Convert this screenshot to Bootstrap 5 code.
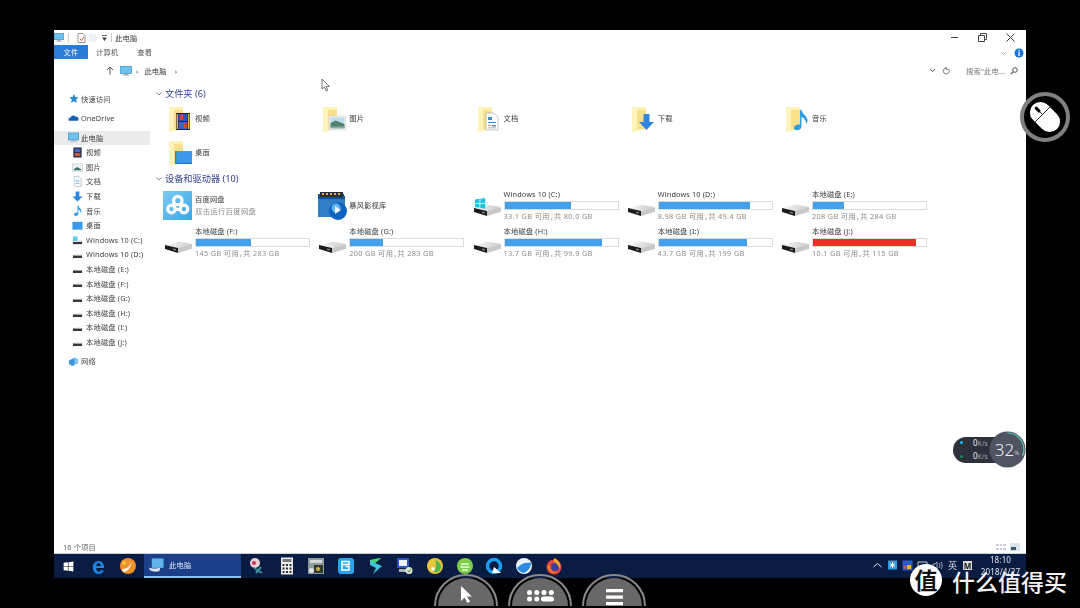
<!DOCTYPE html>
<html lang="zh-CN">
<head>
    <meta charset="UTF-8">
    <title>此电脑</title>
    <link href="https://cdn.jsdelivr.net/npm/bootstrap@5.3.2/dist/css/bootstrap.min.css" rel="stylesheet">
    <style>
        html, body { height: 100%; }
        body { background: #000; overflow: hidden; font-family: "Noto Sans", "Noto Sans CJK SC", sans-serif; font-size: 7.3px; letter-spacing: .15px; color: #3a3a3a; line-height: 12px; }
        .desk { position: relative; width: 1080px; height: 608px; padding: 30px 54px 0; }
        .explorer { height: 524px; background: #fff; filter: blur(.35px); }
        .title-row { height: 15px; }
        .title-row .sep { width: 1px; height: 9px; background: #ccc; }
        .tight { margin-left: 2px; }
        .tight3 { margin-left: 3px; }
        .win-btn { width: 28px; display: flex; justify-content: center; }
        .ribbon-row { height: 15px; }
        .rib-tab { padding: 0 8px; line-height: 14px; color: #555; }
        .rib-tab.active { background: #2b7cd8; color: #fff; width: 34px; text-align: center; padding: 0; }
        .rib-tab.view-tab { margin-left: 3px; }
        .help-wrap { margin-right: 2px; margin-top: 3px; gap: 7px; }
        .addr-row { height: 25px; padding-bottom: 4px; }
        .crumb { margin-left: 6px; }
        .search-hint { color: #777; width: 44px; margin-left: 16px; }
        .side-col { width: 96px; padding-top: 6.7px; flex: none; }
        .side-row { height: 14.6px; line-height: 14.6px; padding: 0 0 0 14px; border: 0; background: transparent; color: #404040; display: flex; align-items: center; border-radius: 0 !important; white-space: nowrap; }
        .side-row svg { width: 11px; height: 11px; margin-right: 2px; flex: none; }
        .side-row.kid { padding-left: 18px; }
        .side-row.kid svg { margin-right: 3px; }
        .side-row.on { background: #ebebeb; }
        .side-gap { margin-top: 4.4px; }
        .side-gap2 { margin-top: 5.4px; }
        .pane { padding: 2px 0 0 0; }
        .group-head { height: 14px; line-height: 14px; padding-left: 6px; color: #2f3f8c; font-size: 9.2px; letter-spacing: 0; display: flex; align-items: center; gap: 3px; }
        .group-next { margin-top: 3px; }
        .tile-grid { display: grid; grid-template-columns: repeat(5, 154.25px); padding-left: 13px; }
        .folders { grid-auto-rows: 34px; }
        .drives { grid-auto-rows: 37px; margin-top: 2px; }
        .tile { display: flex; align-items: flex-start; }
        .tile svg { width: 32px; height: 32px; flex: none; }
        .folders .tile { align-items: center; }
        .single { height: 33px; align-items: center; }
        .drive-name { height: 12px; line-height: 12px; }
        .drive-bar { width: 115px; height: 9px; margin-top: 1px; background: #fff; border: 1px solid #dcdcdc; border-radius: 0; }
        .drive-bar .progress-bar { background: #45a0ea; }
        .drive-bar .progress-bar.full { background: #e53226; }
        .drive-sub { color: #8c8c8c; line-height: 12px; letter-spacing: .35px; font-feature-settings: "halt"; }
        .status-row { height: 14px; padding: 0 6px 0 9px; color: #666; border-bottom: 1px solid #c9d0da; }
        .taskbar { height: 24px; background: #0a1c42; filter: blur(.3px); color: #fff; }
        .task-slot { width: 29.7px; flex: none; display: flex; justify-content: center; align-items: center; }
        .task-slot svg { width: 18px; height: 18px; }
        .edge-e { font-family: "Liberation Sans", sans-serif; font-weight: 700; font-size: 23px; line-height: 20px; color: #1c86e8; }
        .task-on { width: 97px; flex: none; align-self: stretch; background: #1a3f88; border-bottom: 2px solid #8fc3f0; padding-left: 4px; gap: 4px; color: #dfe8f5; margin: 0 1px; }
        .task-on svg { width: 17px; height: 17px; }
        .tray-slot { width: 15px; flex: none; display: flex; justify-content: center; align-items: center; color: #d5dbe6; font-size: 9px; line-height: 9px; margin-top: -2px; }
        .tray-slot svg { width: 11px; height: 11px; }
        .tray-m { background: #d8d8d8; color: #111; width: 9px; height: 9px; font-size: 8px; line-height: 9px; text-align: center; font-weight: 700; }
        .clock { width: 51px; text-align: center; color: #dfe5ee; line-height: 12px; font-size: 8px; }
        .over { position: absolute; }
        .cursor-arrow { left: 321px; top: 78px; width: 10px; height: 14px; }
        .mouse-ring { left: 1020px; top: 92px; width: 50px; height: 50px; }
        .net-pill { left: 953px; top: 437px; width: 56px; height: 26px; border-radius: 13px; background: #2d313c; color: #aab; font-size: 6.5px; }
        .net-line { position: absolute; left: 20px; white-space: nowrap; line-height: 10px; }
        .net-line b { font-weight: 400; color: #eee; font-size: 8px; }
        .net-dot { position: absolute; left: 7px; width: 3px; height: 3px; border-radius: 50%; }
        .net-dial { left: 989px; top: 431px; width: 37px; height: 37px; }
        .net-num { left: 989px; top: 431px; width: 36px; height: 37px; display: flex; align-items: center; justify-content: center; color: #f0f0f0; font-size: 17px; font-weight: 300; letter-spacing: 0; }
        .net-num small { font-size: 6px; margin-top: 6px; }
        .round-btn { top: 574px; width: 64px; height: 32px; }
        .stamp { left: 910px; top: 564px; width: 32px; height: 32px; border-radius: 50%; background: #fff; color: #111; font-family: "Noto Sans CJK SC", sans-serif; font-size: 23px; font-weight: 700; line-height: 31px; text-align: center; }
        .stamp-text { left: 952px; top: 570px; color: #f2f2f2; font-family: "Noto Sans CJK SC", sans-serif; font-size: 23px; font-weight: 500; line-height: 22px; letter-spacing: 0; white-space: nowrap; }
    </style>
</head>
<body>

<svg width="0" height="0" class="position-absolute">
    <defs>
        <linearGradient id="cloudBg" x1="0" y1="0" x2="1" y2="1"><stop offset="0" stop-color="#7ccbf4"/><stop offset="1" stop-color="#3ba6e6"/></linearGradient>
        <linearGradient id="hddTop" x1="0" y1="0" x2="1" y2="0"><stop offset="0" stop-color="#fafafa"/><stop offset="1" stop-color="#c9c9c9"/></linearGradient>

        <symbol id="pc" viewBox="0 0 16 14">
            <rect x="0.5" y="0.5" width="15" height="10" fill="#6ec2ee" stroke="#3d8fc4"/>
            <rect x="5" y="11" width="6" height="1.5" fill="#9ab"/><rect x="3" y="12.5" width="10" height="1.5" fill="#c4ccd4"/>
        </symbol>

        <symbol id="fold-base" viewBox="0 0 32 32">
            <path d="M6 5H20V27L6 30Z" fill="#fdf0b0"/>
            <path d="M11 8H20V27H11Z" fill="#f9e08a"/>
            <path d="M6 5H18L11 8V29L6 30Z" fill="#fff3bc"/>
        </symbol>
        <symbol id="fold-video" viewBox="0 0 32 32">
            <use href="#fold-base" width="32" height="32"/>
            <rect x="13" y="11" width="14" height="17" fill="#1d2433"/>
            <rect x="15.5" y="12" width="9" height="7" fill="#2d54c9"/>
            <rect x="15.5" y="20" width="9" height="7" fill="#3a62d5"/>
            <path d="M17 13h3v5h-3zM21 21h3v5h-3z" fill="#d8412e"/>
            <path d="M13.5 12h1.5v15h-1.5zM25 12h1.5v15H25z" fill="#e0b43c"/>
        </symbol>
        <symbol id="fold-pic" viewBox="0 0 32 32">
            <use href="#fold-base" width="32" height="32"/>
            <rect x="12" y="14" width="17" height="14" fill="#f2f2f2" stroke="#cfd4d8" stroke-width=".6"/>
            <rect x="13.5" y="15.5" width="14" height="6" fill="#bcdcf0"/>
            <path d="M13.5 21l5-2.5 9 3.5v4h-14z" fill="#50836f"/>
            <rect x="13.5" y="24.5" width="14" height="2" fill="#8aa"/>
        </symbol>
        <symbol id="fold-doc" viewBox="0 0 32 32">
            <use href="#fold-base" width="32" height="32"/>
            <path d="M14 11h8l4 4v13H14z" fill="#fff" stroke="#a8b0b8" stroke-width=".7"/>
            <path d="M16 15h4v3h-4zM16 20h8v1h-8zM20 23h4v1.6h-4z" fill="#3f8fd0"/>
            <path d="M16 23h3v1h-3zM16 25.4h8v.8h-8z" fill="#8a98a6"/>
        </symbol>
        <symbol id="fold-down" viewBox="0 0 32 32">
            <use href="#fold-base" width="32" height="32"/>
            <path d="M17.5 12h6v8h4.5l-7.5 8-7.5-8h4.500z" fill="#2f86e0"/>
        </symbol>
        <symbol id="fold-music" viewBox="0 0 32 32">
            <use href="#fold-base" width="32" height="32"/>
            <path d="M20 8h1.500c.5 4 5 5 6 10 .2 1.500-.5 3-1.200 4 0-3-2.300-6-4.800-7V24.500c0 2.300-2.200 3.800-4.500 3.800-2 0-3-1-3-2.300 0-2 2.500-3.500 4.500-3.500.6 0 1.200.1 1.500.3z" fill="#2f9fdf"/>
        </symbol>
        <symbol id="fold-desk" viewBox="0 0 32 32">
            <use href="#fold-base" width="32" height="32"/>
            <rect x="12" y="15" width="17" height="13" fill="#3d97ea"/>
            <rect x="12" y="15" width="1.500" height="13" fill="#2f9b57"/>
            <rect x="12" y="26.500" width="17" height="1.500" fill="#2a80cc"/>
        </symbol>

        <symbol id="baidu" viewBox="0 0 32 32">
            <rect x="0" y="2" width="29" height="29" fill="url(#cloudBg)"/>
            <g fill="none" stroke="#fff" stroke-width="3.200">
                <circle cx="8.500" cy="20" r="3.800"/>
                <circle cx="21" cy="20" r="3.800"/>
                <circle cx="14.800" cy="11.500" r="4.200"/>
                <path d="M11 15l-3 2M18.500 15l3 2M12 20.500h5.500"/>
            </g>
        </symbol>
        <symbol id="storm" viewBox="0 0 32 32">
            <path d="M1 5h26v2h1v21H1z" fill="#12508f"/>
            <path d="M3 3h23v5H3z" fill="#2c2f36"/>
            <path d="M5 4h2v2H5zM9 4h2v2H9zM13 4h2v2h-2zM17 4h2v2h-2zM21 4h2v2h-2z" fill="#e8b23a"/>
            <rect x="1" y="10" width="27" height="18" fill="#2e7fc8"/>
            <circle cx="21" cy="22" r="9" fill="#1163c2"/>
            <circle cx="19" cy="19" r="4.500" fill="#5fb6ef"/>
            <path d="M18 17l6 4-6 4z" fill="#e9f5ff"/>
        </symbol>

        <symbol id="hdd" viewBox="0 0 32 32">
            <path d="M2 20l14-3.200 13 2.200-14 4z" fill="url(#hddTop)"/>
            <path d="M2 20l13 3v5L2 24z" fill="#1c1c1c"/>
            <path d="M10 23.500l3 .7v1.400l-3-.7z" fill="#888"/>
            <path d="M15 23l14-4v4.800L15 28z" fill="#c8c8c8"/>
        </symbol>
        <symbol id="hdd-win" viewBox="0 0 32 32">
            <use href="#hdd" width="32" height="32"/>
            <path d="M3 11.500l4.500-.7v4.200H3zM8.300 10.700l5-.8V15h-5zM3 15.700h4.500v4l-4.500-.6zM8.300 15.700h5v5l-5-.7z" fill="#2bbde0"/>
        </symbol>

        <symbol id="s-star" viewBox="0 0 12 12"><path d="M6.500 1l1.500 3.300 3.500.4-2.600 2.400.7 3.500L6.500 9 3.400 10.600l.7-3.500L1.500 4.700 5 4.300z" fill="#2c87d6"/></symbol>
        <symbol id="s-cloud" viewBox="0 0 12 12"><path d="M1 9.500c-1-1.700 0-3.500 1.800-3.500C3.500 3.800 6.500 3 8 5c2-.3 3.600 1.300 3.500 3 0 .8-.2 1.500-.5 1.500z" fill="#1560b0"/></symbol>
        <symbol id="s-video" viewBox="0 0 12 12"><rect x="1.500" y="0.500" width="9" height="11" fill="#28304a"/><rect x="3" y="2" width="6" height="3.500" fill="#3f6ac9"/><rect x="3" y="6.500" width="6" height="3.500" fill="#c85a40"/></symbol>
        <symbol id="s-pic" viewBox="0 0 12 12"><rect x="0.500" y="2" width="11" height="8" fill="#edf1f4" stroke="#b8c0c8" stroke-width=".6"/><path d="M2 8l3.500-2.500L10 8v1H2z" fill="#3d6f74"/></symbol>
        <symbol id="s-doc" viewBox="0 0 12 12"><path d="M2.500.5h5l2.500 2.500v8.500H2.500z" fill="#f7fafc" stroke="#a9b4bd" stroke-width=".7"/><path d="M4 5h4v.9H4zM4 7.500h4v.9H4z" fill="#6fa9d6"/></symbol>
        <symbol id="s-down" viewBox="0 0 12 12"><path d="M4 .5h4v5.500h3.500L6 11.500.5 6H4z" fill="#2f86e0"/></symbol>
        <symbol id="s-music" viewBox="0 0 12 12"><path d="M6 .5h1c.3 2.500 3 3.300 3.300 6 0 .9-.4 1.700-.8 2.300 0-1.800-1.200-3.300-2.500-3.800v4.600C7 11 5.700 12 4.300 12 3 12 2.200 11.300 2.200 10.400 2.200 9 3.800 8.200 5 8.200c.4 0 .8 0 1 .2z" fill="#2f9fdf"/></symbol>
        <symbol id="s-desk" viewBox="0 0 12 12"><rect x="0.500" y="2" width="11" height="8.500" fill="#3a97ea"/></symbol>
        <symbol id="s-cwin" viewBox="0 0 12 12"><rect x="1" y="1.500" width="5" height="5" fill="#5ccdea"/><rect x="1" y="7.500" width="10" height="2.500" fill="#33393f"/><rect x="6" y="6" width="5" height="1.500" fill="#cfd4d8"/></symbol>
        <symbol id="s-disk" viewBox="0 0 12 12"><rect x="1" y="7" width="10" height="2.800" fill="#33383d"/><rect x="3" y="6.200" width="7" height=".8" fill="#c8ccd0"/></symbol>
        <symbol id="s-net" viewBox="0 0 12 12"><path d="M1 5l6-3 4 1.500v4L5 11 1 9z" fill="#3d9ade"/><path d="M7 2l4 1.500v4L7 9.500z" fill="#7fc4ee"/></symbol>

        <symbol id="t-orange" viewBox="0 0 18 18"><circle cx="9" cy="9" r="8" fill="#ef8f2c"/><path d="M3 12c4 0 8-2 10-8-1 6-3 9-7 11-2 0-3-1-3-3z" fill="#fff3dc"/><circle cx="5" cy="6" r="2" fill="#f6c33e"/></symbol>
        <symbol id="t-pc" viewBox="0 0 18 18"><path d="M4 1.500h12.500v10H4z" fill="#5fb4ee"/><path d="M1 11c3 1.500 8 1.500 12 .5l-1 3.500c-4 1-7 .5-10-1z" fill="#d6e6f5"/></symbol>
        <symbol id="t-snip" viewBox="0 0 18 18"><circle cx="7" cy="6" r="5" fill="#e8cfd4"/><circle cx="6" cy="6" r="2" fill="#c23a55"/><path d="M6 11l8 5M13 10l-5 6" stroke="#3a8a9a" stroke-width="2"/></symbol>
        <symbol id="t-calc" viewBox="0 0 18 18"><rect x="3" y="0.500" width="12" height="17" fill="#eee"/><rect x="4.500" y="2" width="9" height="3" fill="#777"/><path d="M4.500 7h2v2h-2zM8 7h2v2H8zM11.500 7h2v2h-2zM4.500 10.500h2v2h-2zM8 10.500h2v2H8zM11.500 10.500h2v2h-2zM4.500 14h2v2h-2zM8 14h2v2H8zM11.500 14h2v2h-2z" fill="#333"/></symbol>
        <symbol id="t-panel" viewBox="0 0 18 18"><rect x="1" y="1" width="16" height="16" fill="#8f9a9c"/><rect x="3" y="3" width="12" height="3" fill="#d2d8d9"/><rect x="7" y="8" width="9" height="8" fill="#2f3a2a"/><circle cx="11" cy="12" r="2" fill="#d2b04c"/><circle cx="4.500" cy="13.500" r="2.500" fill="#e2e2e2"/></symbol>
        <symbol id="t-qq" viewBox="0 0 18 18"><rect x="1" y="1" width="16" height="16" rx="3" fill="#2ba4ee"/><path d="M5 4.500h7v3H5zM5 7.500v5.500h7V9.500H8.500" fill="none" stroke="#fff" stroke-width="1.500"/></symbol>
        <symbol id="t-wing" viewBox="0 0 18 18"><path d="M3 3l11-2-6 5 7 3-9 8 3-6-6-3z" fill="#3fc4d8"/><path d="M3 3l11-2-6 5z" fill="#4bd468"/></symbol>
        <symbol id="t-net" viewBox="0 0 18 18"><rect x="1" y="1" width="12" height="10" fill="#2b53c8"/><rect x="3" y="3" width="8" height="6" fill="#f0f4fa"/><rect x="3" y="12" width="7" height="3" fill="#aeb4bc"/><circle cx="13" cy="13.500" r="3.500" fill="#dfe5d5"/><path d="M11.500 14l1.500 1 2-3" stroke="#3a8c3a" fill="none"/></symbol>
        <symbol id="t-music" viewBox="0 0 18 18"><circle cx="9" cy="9" r="8" fill="#e8c53a"/><path d="M9 3c4 1 6 4 6 8-1 3-4 5-7 4 2-3 3-7 1-12z" fill="#4bb84f"/><circle cx="7" cy="12" r="1.800" fill="#fff"/></symbol>
        <symbol id="t-green" viewBox="0 0 18 18"><circle cx="9" cy="9" r="8" fill="#7fce4b"/><path d="M5 7h8M4.500 10h9M6 13h6" stroke="#eaffd8" stroke-width="1.500"/></symbol>
        <symbol id="t-q" viewBox="0 0 18 18"><circle cx="9" cy="9" r="6.500" fill="none" stroke="#1d9cf0" stroke-width="3.500"/><path d="M9 10l7 6H7z" fill="#fff"/></symbol>
        <symbol id="t-ball" viewBox="0 0 18 18"><circle cx="9" cy="9" r="8" fill="#ecf4fb"/><path d="M2 11c4-5 9-6 14-5 0 4-3 9-8 10-3-1-5-3-6-5z" fill="#2b8be2"/></symbol>
        <symbol id="t-fox" viewBox="0 0 18 18"><circle cx="9" cy="10" r="7.500" fill="#e8443a"/><circle cx="10" cy="10" r="4" fill="#3a3f9e"/><path d="M9 1c5 2 7 6 6 11-2-3-3-6-6-7z" fill="#f8a72c"/><path d="M2 9C3 14 8 18 13 16 8 16 5 13 5 8z" fill="#f07c2a"/></symbol>
    </defs>
</svg>

<div class="desk">
    <div class="explorer d-flex flex-column">
        <div class="title-row d-flex align-items-center">
            <svg width="10" height="9"><use href="#pc"/></svg>
            <span class="sep ms-1"></span>
            <svg class="ms-2" width="9" height="10" viewBox="0 0 9 10"><path d="M1 .5h5l2 2v7H1z" fill="#fff" stroke="#999"/><path d="M3 6l1.500 1.500L7 4" stroke="#d9542b" fill="none"/></svg>
            <svg class="tight" width="9" height="10" viewBox="0 0 9 10"><rect x="1" y="1" width="7" height="8" fill="#eef3f8"/></svg>
            <svg class="ms-1" width="7" height="8" viewBox="0 0 7 8"><path d="M1 1h5v.8H1zM1 3.500h5L3.500 7z" fill="#444"/></svg>
            <span class="sep tight3"></span>
            <span class="tight3">此电脑</span>
            <div class="d-flex ms-auto align-items-center">
                <div class="win-btn"><svg width="9" height="9"><path d="M1 4.500h7" stroke="#444"/></svg></div>
                <div class="win-btn"><svg width="9" height="9"><path d="M.5 2.500h6v6h-6zM2.500 2.500v-2h6v6h-2" fill="none" stroke="#444"/></svg></div>
                <div class="win-btn"><svg width="9" height="9"><path d="M.5.500l8 8M8.500.500l-8 8" stroke="#444"/></svg></div>
            </div>
            <span class="tight"></span>
        </div>

        <div class="ribbon-row d-flex align-items-start">
            <ul class="nav">
                <li class="rib-tab active">文件</li>
                <li class="rib-tab">计算机</li>
                <li class="rib-tab view-tab">查看</li>
            </ul>
            <div class="help-wrap ms-auto d-flex align-items-center">
                <svg width="7" height="5" viewBox="0 0 7 5"><path d="M1 1l2.500 2.500L6 1" stroke="#bbb" fill="none"/></svg>
                <svg width="10" height="10" viewBox="0 0 10 10"><circle cx="5" cy="5" r="4.500" fill="#1a73d8"/><rect x="4.400" y="4" width="1.300" height="4" fill="#fff"/><rect x="4.400" y="2" width="1.300" height="1.300" fill="#fff"/></svg>
            </div>
        </div>

        <div class="addr-row d-flex align-items-center">
            <svg style="margin-left:52px" width="8" height="9" viewBox="0 0 8 9"><path d="M4 8.500V1M1 4l3-3 3 3" stroke="#555" fill="none"/></svg>
            <svg class="crumb" width="12" height="10"><use href="#pc"/></svg>
            <span class="ms-1">›</span>
            <span class="crumb">此电脑</span>
            <span class="ms-2">›</span>
            <div class="ms-auto d-flex align-items-center">
                <svg width="7" height="5" viewBox="0 0 7 5"><path d="M1 1l2.500 2.500L6 1" stroke="#555" fill="none"/></svg>
                <svg class="crumb" width="8" height="8" viewBox="0 0 8 8"><path d="M6.500 2a3 3 0 1 1-2-1M4 0v2.200h2" stroke="#555" fill="none" stroke-width=".8"/></svg>
                <span class="search-hint">搜索"此电...</span>
                <svg class="me-2" width="8" height="8" viewBox="0 0 8 8"><circle cx="5" cy="3" r="2.300" stroke="#555" fill="none"/><path d="M3.400 4.600L.8 7.200" stroke="#555" stroke-width="1.200"/></svg>
            </div>
        </div>

        <div class="d-flex flex-grow-1">
            <div class="side-col list-group list-group-flush">
                <div class="side-row"><svg><use href="#s-star"/></svg>快速访问</div>
                <div class="side-row side-gap"><svg><use href="#s-cloud"/></svg>OneDrive</div>
                <div class="side-row on side-gap2"><svg><use href="#pc"/></svg>此电脑</div>
                <div class="side-row kid"><svg><use href="#s-video"/></svg>视频</div>
                <div class="side-row kid"><svg><use href="#s-pic"/></svg>图片</div>
                <div class="side-row kid"><svg><use href="#s-doc"/></svg>文档</div>
                <div class="side-row kid"><svg><use href="#s-down"/></svg>下载</div>
                <div class="side-row kid"><svg><use href="#s-music"/></svg>音乐</div>
                <div class="side-row kid"><svg><use href="#s-desk"/></svg>桌面</div>
                <div class="side-row kid"><svg><use href="#s-cwin"/></svg>Windows 10 (C:)</div>
                <div class="side-row kid"><svg><use href="#s-disk"/></svg>Windows 10 (D:)</div>
                <div class="side-row kid"><svg><use href="#s-disk"/></svg>本地磁盘 (E:)</div>
                <div class="side-row kid"><svg><use href="#s-disk"/></svg>本地磁盘 (F:)</div>
                <div class="side-row kid"><svg><use href="#s-disk"/></svg>本地磁盘 (G:)</div>
                <div class="side-row kid"><svg><use href="#s-disk"/></svg>本地磁盘 (H:)</div>
                <div class="side-row kid"><svg><use href="#s-disk"/></svg>本地磁盘 (I:)</div>
                <div class="side-row kid"><svg><use href="#s-disk"/></svg>本地磁盘 (J:)</div>
                <div class="side-row side-gap"><svg><use href="#s-net"/></svg>网络</div>
            </div>

            <div class="pane flex-grow-1">
                <div class="group-head"><svg width="6" height="4" viewBox="0 0 6 4"><path d="M.5.500L3 3 5.500.500" stroke="#888" fill="none"/></svg>文件夹 (6)</div>
                <div class="tile-grid folders">
                    <div class="tile"><svg><use href="#fold-video"/></svg>视频</div>
                    <div class="tile"><svg><use href="#fold-pic"/></svg>图片</div>
                    <div class="tile"><svg><use href="#fold-doc"/></svg>文档</div>
                    <div class="tile"><svg><use href="#fold-down"/></svg>下载</div>
                    <div class="tile"><svg><use href="#fold-music"/></svg>音乐</div>
                    <div class="tile"><svg><use href="#fold-desk"/></svg>桌面</div>
                </div>
                <div class="group-head group-next"><svg width="6" height="4" viewBox="0 0 6 4"><path d="M.5.500L3 3 5.500.500" stroke="#888" fill="none"/></svg>设备和驱动器 (10)</div>
                <div class="tile-grid drives">
                    <div class="tile single"><svg><use href="#baidu"/></svg><div>百度网盘<div class="drive-sub">双击运行百度网盘</div></div></div>
                    <div class="tile single"><svg><use href="#storm"/></svg>暴风影视库</div>
                    <div class="tile"><svg><use href="#hdd-win"/></svg><div><div class="drive-name">Windows 10 (C:)</div><div class="progress drive-bar"><div class="progress-bar" style="width:58.5%"></div></div><div class="drive-sub">33.1 GB 可用，共 80.0 GB</div></div></div>
                    <div class="tile"><svg><use href="#hdd"/></svg><div><div class="drive-name">Windows 10 (D:)</div><div class="progress drive-bar"><div class="progress-bar" style="width:81%"></div></div><div class="drive-sub">8.98 GB 可用，共 49.4 GB</div></div></div>
                    <div class="tile"><svg><use href="#hdd"/></svg><div><div class="drive-name">本地磁盘 (E:)</div><div class="progress drive-bar"><div class="progress-bar" style="width:27%"></div></div><div class="drive-sub">208 GB 可用，共 284 GB</div></div></div>
                    <div class="tile"><svg><use href="#hdd"/></svg><div><div class="drive-name">本地磁盘 (F:)</div><div class="progress drive-bar"><div class="progress-bar" style="width:48.5%"></div></div><div class="drive-sub">145 GB 可用，共 283 GB</div></div></div>
                    <div class="tile"><svg><use href="#hdd"/></svg><div><div class="drive-name">本地磁盘 (G:)</div><div class="progress drive-bar"><div class="progress-bar" style="width:29%"></div></div><div class="drive-sub">200 GB 可用，共 283 GB</div></div></div>
                    <div class="tile"><svg><use href="#hdd"/></svg><div><div class="drive-name">本地磁盘 (H:)</div><div class="progress drive-bar"><div class="progress-bar" style="width:86%"></div></div><div class="drive-sub">13.7 GB 可用，共 99.9 GB</div></div></div>
                    <div class="tile"><svg><use href="#hdd"/></svg><div><div class="drive-name">本地磁盘 (I:)</div><div class="progress drive-bar"><div class="progress-bar" style="width:78%"></div></div><div class="drive-sub">43.7 GB 可用，共 199 GB</div></div></div>
                    <div class="tile"><svg><use href="#hdd"/></svg><div><div class="drive-name">本地磁盘 (J:)</div><div class="progress drive-bar"><div class="progress-bar full" style="width:91%"></div></div><div class="drive-sub">10.1 GB 可用，共 115 GB</div></div></div>
                </div>
            </div>
        </div>

        <div class="status-row d-flex justify-content-between align-items-center">
            <span>16 个项目</span>
            <div class="d-flex gap-1">
                <svg width="10" height="8" viewBox="0 0 10 8"><path d="M0 1h3v2H0zM4 1h2v2H4zM7 1h3v2H7zM0 5h3v2H0zM4 5h2v2H4zM7 5h3v2H7z" fill="#ccd"/></svg>
                <svg width="10" height="8" viewBox="0 0 10 8"><rect width="10" height="8" fill="#d8e6f0"/><rect x="1" y="4" width="5" height="3" fill="#456"/></svg>
            </div>
        </div>
    </div>

    <div class="taskbar d-flex align-items-center">
        <div class="task-slot"><svg viewBox="0 0 18 18" style="width:11px;height:11px"><path d="M1 3l7-1v6.500H1zM9 2l8-1v7.500H9zM1 9.500h7V16l-7-1zM9 9.500h8V17l-8-1z" fill="#fff"/></svg></div>
        <div class="task-slot"><span class="edge-e">e</span></div>
        <div class="task-slot"><svg><use href="#t-orange"/></svg></div>
        <div class="task-on d-flex align-items-center"><svg><use href="#t-pc"/></svg><span>此电脑</span></div>
        <div class="task-slot"><svg><use href="#t-snip"/></svg></div>
        <div class="task-slot"><svg><use href="#t-calc"/></svg></div>
        <div class="task-slot"><svg><use href="#t-panel"/></svg></div>
        <div class="task-slot"><svg><use href="#t-qq"/></svg></div>
        <div class="task-slot"><svg><use href="#t-wing"/></svg></div>
        <div class="task-slot"><svg><use href="#t-net"/></svg></div>
        <div class="task-slot"><svg><use href="#t-music"/></svg></div>
        <div class="task-slot"><svg><use href="#t-green"/></svg></div>
        <div class="task-slot"><svg><use href="#t-q"/></svg></div>
        <div class="task-slot"><svg><use href="#t-ball"/></svg></div>
        <div class="task-slot"><svg><use href="#t-fox"/></svg></div>
        <div class="ms-auto d-flex align-items-center">
            <div class="tray-slot"><svg viewBox="0 0 11 11"><path d="M1.500 7L5.500 3.500 9.500 7" stroke="#dde" fill="none"/></svg></div>
            <div class="tray-slot"><svg viewBox="0 0 11 11"><rect x="1" y="0.500" width="9" height="9" fill="#2a9be8"/><path d="M5.500 2v6M3 3.500l5 3M8 3.500l-5 3" stroke="#fff"/></svg></div>
            <div class="tray-slot"><svg viewBox="0 0 11 11"><rect x="0.500" y="0.500" width="10" height="10" fill="#2a5cc8"/><rect x="5" y="5" width="4" height="4" fill="#f0b030"/><circle cx="3" cy="7" r="1.500" fill="#e84a60"/></svg></div>
            <div class="tray-slot"><svg viewBox="0 0 11 11"><path d="M1 2h9v6H1z" fill="none" stroke="#ccd"/><path d="M4 9.500h3" stroke="#ccd"/></svg></div>
            <div class="tray-slot"><svg viewBox="0 0 11 11"><path d="M1 4h2l2-2v7L3 7H1zM7 3c1 1.500 1 3.500 0 5M9 2c1.500 2 1.500 5 0 7" stroke="#ccd" fill="none" stroke-width=".8"/></svg></div>
            <div class="tray-slot">英</div>
            <div class="tray-slot"><span class="tray-m">M</span></div>
            <div class="clock">18:10<br>2018/4/27</div>
        </div>
    </div>

    <svg class="over cursor-arrow" viewBox="0 0 10 14"><path d="M1 1v10l2.500-2 1.700 4 1.600-.7L5.200 8.500H8.500z" fill="#fff" stroke="#555" stroke-width=".8"/></svg>

    <svg class="over mouse-ring" viewBox="0 0 50 50">
        <circle cx="25" cy="25" r="23" fill="#000" stroke="#808080" stroke-width="4"/>
        <g transform="rotate(-45 25 25)">
            <rect x="14.500" y="8" width="21" height="34" rx="10.500" fill="#fff"/>
            <path d="M14.500 21.500h21" stroke="#000" stroke-width=".8"/>
            <rect x="23.500" y="11" width="3" height="7" rx="1.500" fill="#000"/>
            <path d="M25 18v3.500" stroke="#000" stroke-width=".8"/>
        </g>
    </svg>

    <div class="over net-pill">
        <span class="net-dot bg-info" style="top:4px"></span>
        <span class="net-line" style="top:1px"><b>0</b>K/s</span>
        <span class="net-dot bg-success" style="top:17.500px"></span>
        <span class="net-line" style="top:14px"><b>0</b>K/s</span>
    </div>
    <svg class="over net-dial" viewBox="0 0 37 37">
        <circle cx="18.500" cy="18.500" r="18" fill="#4e5461"/>
        <path d="M18.500 2A16.500 16.500 0 0 1 33.500 25" fill="none" stroke="#5cc8b0" stroke-width="1.200"/>
    </svg>
    <div class="over net-num">32<small>%</small></div>

    <svg class="over round-btn" style="left:434px" viewBox="0 0 64 32">
        <path d="M1 32a31 31 0 0 1 62 0" fill="none" stroke="#8a8a8a" stroke-width="2"/>
        <path d="M4 32a28 28 0 0 1 56 0z" fill="#686868"/>
        <path d="M27 12v15l3.500-3.500 3 5.500 2.500-1.500-3-5h5z" fill="#fff"/>
    </svg>
    <svg class="over round-btn" style="left:508px" viewBox="0 0 64 32">
        <path d="M1 32a31 31 0 0 1 62 0" fill="none" stroke="#8a8a8a" stroke-width="2"/>
        <path d="M4 32a28 28 0 0 1 56 0z" fill="#686868"/>
        <g fill="#fff"><circle cx="21.500" cy="18.500" r="2.500"/><circle cx="28.800" cy="18.500" r="2.500"/><circle cx="36" cy="18.500" r="2.500"/><circle cx="43.300" cy="18.500" r="2.500"/><circle cx="21.500" cy="25" r="2.500"/><circle cx="28.800" cy="25" r="2.500"/><rect x="33" y="22.500" width="13" height="5" rx="2.500"/></g>
    </svg>
    <svg class="over round-btn" style="left:582px" viewBox="0 0 64 32">
        <path d="M1 32a31 31 0 0 1 62 0" fill="none" stroke="#8a8a8a" stroke-width="2"/>
        <path d="M4 32a28 28 0 0 1 56 0z" fill="#686868"/>
        <path d="M24 15h17v3.300H24zM24 21.500h17v3.300H24zM24 28h17v3.300H24z" fill="#fff"/>
    </svg>

    <div class="over stamp">值</div>
    <div class="over stamp-text">什么值得买</div>
</div>

<script src="https://cdn.jsdelivr.net/npm/bootstrap@5.3.2/dist/js/bootstrap.bundle.min.js"></script>
</body>
</html>
